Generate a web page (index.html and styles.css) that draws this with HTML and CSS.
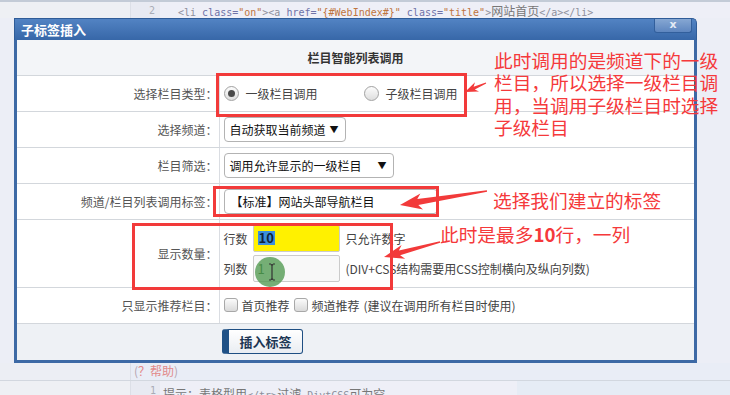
FILE: index.html
```html
<!DOCTYPE html>
<html lang="zh-CN">
<head>
    <meta charset="UTF-8">
    <meta name="viewport" content="width=device-width, initial-scale=1.0">
    <title>子标签插入</title>
    <link rel="stylesheet" href="styles.css">
</head>
<body>
    <div class="code-row code-top">
        <span class="ln">2</span>
        <span class="code"><span class="tg">&lt;li</span> <span class="at">class=</span><span class="vl">"on"</span><span class="tg">&gt;&lt;a</span> <span class="at">href=</span><span class="vl">"{#WebIndex#}"</span> <span class="at">class=</span><span class="vl">"title"</span><span class="tg">&gt;</span><span class="cn">网站首页</span><span class="tg">&lt;/a&gt;&lt;/li&gt;</span></span>
    </div>

    <div class="dialog">
        <div class="dialog-title">
            <span>子标签插入</span>
            <span class="dialog-close">x</span>
        </div>
        <div class="dialog-body">
            <table class="form">
                <colgroup><col class="col-lbl"><col></colgroup>
                <tr class="row-head"><td colspan="2">栏目智能列表调用</td></tr>
                <tr>
                    <td class="lbl">选择栏目类型：</td>
                    <td class="fld">
                        <div class="opts">
                            <span class="opt"><span class="radio checked"></span>一级栏目调用</span>
                            <span class="opt opt-2"><span class="radio"></span>子级栏目调用</span>
                        </div>
                    </td>
                </tr>
                <tr>
                    <td class="lbl">选择频道：</td>
                    <td class="fld"><span class="sel sel-1">自动获取当前频道<span class="arrow">▼</span></span></td>
                </tr>
                <tr>
                    <td class="lbl">栏目筛选：</td>
                    <td class="fld"><span class="sel sel-2">调用允许显示的一级栏目<span class="arrow">▼</span></span></td>
                </tr>
                <tr>
                    <td class="lbl">频道/栏目列表调用标签：</td>
                    <td class="fld"><span class="txt txt-tag">【标准】网站头部导航栏目</span></td>
                </tr>
                <tr class="row-num">
                    <td class="lbl">显示数量：</td>
                    <td class="fld">
                        <div class="num-grid">
                            <span>行数</span>
                            <span class="txt txt-num txt-yellow"><span class="hl">10</span></span>
                            <span>只允许数字</span>
                            <span>列数</span>
                            <span class="txt txt-num txt-gray">1</span>
                            <span>(DIV+CSS结构需要用CSS控制横向及纵向列数)</span>
                        </div>
                    </td>
                </tr>
                <tr>
                    <td class="lbl">只显示推荐栏目：</td>
                    <td class="fld">
                        <div class="opts">
                            <span class="opt"><span class="check"></span>首页推荐</span>
                            <span class="opt"><span class="check"></span>频道推荐</span>
                            <span>(建议在调用所有栏目时使用)</span>
                        </div>
                    </td>
                </tr>
                <tr class="row-foot">
                    <td class="lbl"></td>
                    <td class="fld"><button class="btn-insert">插入标签</button></td>
                </tr>
            </table>
        </div>
    </div>

    <div class="help"><span class="paren">(</span>？帮助<span class="paren">)</span></div>
    <div class="code-row code-bottom">
        <span class="ln">1</span>
        <span class="code"><span class="cn">提示：表格型用</span>&lt;/tr&gt;<span class="cn">过滤</span> DivtCSS<span class="cn">可为空</span></span>
    </div>

    <!-- annotations drawn on top of the screenshot -->
    <div class="mark b1"></div>
    <div class="mark b2"></div>
    <div class="mark b3"></div>
    <svg class="arrows" width="730" height="395" viewBox="0 0 730 395">
        <polygon points="485.8,82.5 473.6,86.7 475,82.3 465,92 479,91.5 474.8,89.5 486.2,83.5"/>
        <polygon points="486.9,190.3 417.3,199.1 420.4,193.6 400,205 423,209.4 418.3,205.1 487.1,191.7"/>
        <polygon points="439.9,241.3 398.9,250.5 401.6,245.1 384,257 405.2,258.7 400.1,255.3 440.1,242.7"/>
    </svg>
    <div class="note n1">此时调用的是频道下的一级<br>栏目，所以选择一级栏目调<br>用，当调用子级栏目时选择<br>子级栏目</div>
    <div class="note n2">选择我们建立的标签</div>
    <div class="note n3">此时是最多<b>10</b>行，一列</div>

    <div class="cursor-dot"></div>
    <svg class="ibeam" width="10" height="18" viewBox="0 0 10 18">
        <path d="M2 1 H4 M6 1 H8 M5 1 V17 M2 17 H4 M6 17 H8 M4 1.5 L5 2.5 L6 1.5 M4 16.5 L5 15.5 L6 16.5" stroke="#333" stroke-width="1.2" fill="none"/>
    </svg>
</body>
</html>
```

FILE: styles.css
```css
* {
    box-sizing: border-box;
}
body {
    margin: 0;
    width: 730px;
    height: 395px;
    overflow: hidden;
    position: relative;
    font-family: "Noto Sans CJK SC", "Liberation Sans", sans-serif;
    font-size: 12px;
    color: #444;
    background: #eceef6;
}

/* code editor lines behind the dialog */
.code-row {
    display: flex;
    align-items: center;
    background: linear-gradient(to right, #eef0f4 0, #eef0f4 130px, #dcdfe7 130px, #dcdfe7 131px, #e8eaf2 131px, #e8eaf2 160px, #eeeff7 160px);
}
.code-top {
    height: 18px;
    border-top: 2px solid #c3cbd7;
}
.ln {
    width: 160px;
    padding-right: 5px;
    text-align: right;
    font-family: "DejaVu Sans Mono", monospace;
    font-size: 10px;
    color: #a9acb6;
}
.code {
    padding-left: 18px;
    font-family: "DejaVu Sans Mono", monospace;
    font-size: 10px;
    white-space: pre;
    color: #8c8f9c;
}
.code .cn {
    font-family: "Noto Sans CJK SC", sans-serif;
    font-size: 12px;
    color: #777;
}
.code .tg {
    color: #8e909c;
}
.code .at {
    color: #6f73a8;
}
.code .vl {
    color: #c0753e;
}

/* dialog */
.dialog {
    width: 683px;
    margin-left: 14px;
}
.dialog-title {
    height: 22px;
    display: flex;
    justify-content: space-between;
    align-items: flex-start;
    padding-left: 6px;
    background: linear-gradient(#5283c3, #3767a8);
    border: 1px solid #2f5c98;
    border-bottom: 0;
    border-radius: 0 5px 0 0;
    color: #fff;
    font-size: 13px;
    font-weight: bold;
    line-height: 21px;
}
.dialog-close {
    width: 38px;
    height: 14px;
    margin: 0 4px 0 0;
    background: linear-gradient(#86a7d3, #5e86bf);
    border: 1px solid #325f9c;
    border-top: 0;
    border-radius: 0 0 3px 3px;
    color: #e4ebf5;
    font-family: "DejaVu Sans", sans-serif;
    font-size: 11px;
    line-height: 12px;
    text-align: center;
}
.dialog-body {
    border: 3px solid #3d69a5;
    border-top: 0;
    background: #fff;
}

/* form table */
.form {
    width: 100%;
    border-collapse: collapse;
    table-layout: fixed;
}
.col-lbl {
    width: 202px;
}
.form td {
    height: 36px;
    padding: 0;
    border-bottom: 1px solid #d3d7dc;
}
.form .lbl {
    text-align: right;
    padding-right: 1px;
    color: #555;
    border-right: 1px solid #dadde2;
}
.form .fld {
    padding-left: 4px;
    color: #444;
}
.row-head td {
    height: 35px;
    text-align: center;
    font-weight: bold;
    color: #333;
    background: #f3f5f8;
}
.row-num td {
    height: 68px;
}
.row-foot td {
    height: 37px;
    border-bottom: 0;
    background: #eef1f5;
}
.row-foot .lbl {
    border-right: 0;
}

.opts {
    display: flex;
    align-items: center;
}
.opt {
    display: flex;
    align-items: center;
    gap: 4px;
    margin-right: 4px;
}
.opt-2 {
    margin-left: 42px;
}
.radio {
    width: 15px;
    height: 15px;
    border-radius: 50%;
    border: 1px solid #a3a3a3;
    background: linear-gradient(#fcfcfc, #dedede);
    margin-right: 3px;
    display: flex;
    align-items: center;
    justify-content: center;
}
.radio.checked::after {
    content: "";
    width: 7px;
    height: 7px;
    border-radius: 50%;
    background: #4a4a4a;
}
.check {
    width: 14px;
    height: 14px;
    border-radius: 3px;
    border: 1px solid #a8a8a8;
    background: linear-gradient(#fbfbfb, #dadada);
}

.sel, .txt {
    display: inline-flex;
    align-items: center;
    height: 25px;
    border: 1px solid #b3b3b3;
    border-radius: 4px;
    background: #fff;
    color: #111;
    vertical-align: middle;
}
.sel {
    justify-content: space-between;
    padding: 0 6px 0 5px;
}
.sel-1 {
    width: 122px;
}
.sel-2 {
    width: 170px;
}
.arrow {
    font-size: 9px;
    color: #111;
}
.txt-tag {
    width: 214px;
    padding-left: 6px;
}

.num-grid {
    display: grid;
    grid-template-columns: 24px 87px auto;
    column-gap: 5px;
    row-gap: 3px;
    align-items: center;
}
.num-grid > span:nth-child(3n) {
    margin-left: 1px;
}
.txt-num {
    height: 27px;
    border-radius: 2px;
    border-color: #cbcbcb;
    padding-left: 4px;
    font-size: 13px;
}
.txt-yellow {
    background: #fff100;
}
.txt-gray {
    background: #f8f8f8;
    color: #2a5a2a;
}
.hl {
    background: #3b8fdc;
    color: #10243a;
    font-weight: bold;
    line-height: 14px;
    padding: 0 1px;
}

.btn-insert {
    width: 81px;
    height: 25px;
    margin-left: -1px;
    border: 1px solid #1f4f83;
    border-left: 7px solid #1f5186;
    border-radius: 3px;
    background: linear-gradient(#ffffff, #e9edf2);
    color: #1c3654;
    font-family: "Noto Sans CJK SC", sans-serif;
    font-size: 13px;
    font-weight: bold;
    line-height: 20px;
    padding: 0;
}

/* below the dialog */
.help {
    height: 17px;
    padding-left: 134px;
    line-height: 15px;
    color: #e28a8a;
    background: linear-gradient(to right, #eceef4 0, #eceef4 130px, #dcdfe7 130px, #dcdfe7 131px, #e9edf6 131px);
}
.help .paren {
    color: #b5a5b0;
}
.code-bottom {
    height: 22px;
    border-top: 1px solid #d2d7df;
    background: linear-gradient(to right, #eef0f4 0, #eef0f4 130px, #dcdfe7 130px, #dcdfe7 131px, #e8eaf2 131px, #e8eaf2 160px, #eeeff7 160px, #eeeff7 517px, #e6ecf5 517px);
    align-items: flex-start;
    padding-top: 4px;
}
.code-bottom .code {
    padding-left: 3px;
}
.code-bottom .ln {
    padding-right: 4px;
}

/* red annotations */
.mark {
    position: absolute;
    border: 3px solid #f23a3a;
}
.b1 {
    left: 216px;
    top: 73px;
    width: 251px;
    height: 44px;
}
.b2 {
    left: 213px;
    top: 186px;
    width: 226px;
    height: 31px;
}
.b3 {
    left: 132px;
    top: 223px;
    width: 261px;
    height: 67px;
}
.arrows {
    position: absolute;
    left: 0;
    top: 0;
    fill: #f23a3a;
}
.note {
    position: absolute;
    color: #f5393b;
    font-size: 18.7px;
    line-height: 22.4px;
    white-space: nowrap;
}
.n1 {
    left: 494px;
    top: 49px;
}
.n2 {
    left: 493px;
    top: 189px;
}
.n3 {
    left: 440px;
    top: 223px;
}

.cursor-dot {
    position: absolute;
    left: 255px;
    top: 257px;
    width: 30px;
    height: 30px;
    border-radius: 50%;
    background: rgba(80, 152, 80, 0.78);
}
.ibeam {
    position: absolute;
    left: 267px;
    top: 263px;
}
```
